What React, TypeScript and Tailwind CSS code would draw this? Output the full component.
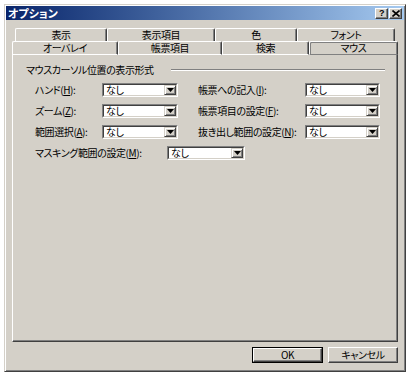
import React from "react";

function TitleBtn({ children }: { children: React.ReactNode }) {
  return (
    <div className="w-[13px] h-[11px] bg-[#d4d0c8] border border-t-white border-l-white border-r-[#404040] border-b-[#404040] shadow-[inset_-1px_-1px_0_#808080] flex items-center justify-center">
      {children}
    </div>
  );
}

function Combo({ w }: { w: string }) {
  return (
    <div className={`${w} h-[14px] border border-t-[#808080] border-l-[#808080] border-r-white border-b-white`}>
      <div className="h-full w-full border border-t-[#404040] border-l-[#404040] border-r-[#d4d0c8] border-b-[#d4d0c8] bg-white flex">
        <div className="flex-1 pl-[2px] flex items-center">なし</div>
        <div className="w-[12px] h-full bg-[#d4d0c8] border border-t-[#d4d0c8] border-l-[#d4d0c8] border-r-[#404040] border-b-[#404040] shadow-[inset_1px_1px_0_#fff,inset_-1px_-1px_0_#808080] flex items-center justify-center">
          <svg width="7" height="4" viewBox="0 0 7 4">
            <path d="M0 0h7L3.5 4z" fill="#000" />
          </svg>
        </div>
      </div>
    </div>
  );
}

function Label({ text, k, w }: { text: string; k: string; w: string }) {
  return (
    <div className={`${w} flex items-center`}>
      <span>
        {text}(<span className="underline">{k}</span>):
      </span>
    </div>
  );
}

const row1 = [
  { label: "表示", w: "w-[92px]" },
  { label: "表示項目", w: "w-[108px]" },
  { label: "色", w: "w-[82px]" },
  { label: "フォント", w: "w-[98px]" },
];
const row2 = [
  { label: "オーバレイ", w: "w-[106px]", sel: false },
  { label: "帳票項目", w: "w-[104px]", sel: false },
  { label: "検索", w: "w-[87px]", sel: false },
  { label: "マウス", w: "w-[89px]", sel: true },
];

export default function App() {
  return (
    <div className="w-[415px] h-[378px] bg-white pt-[4px] pl-[4px] font-['Noto_Sans_CJK_JP',sans-serif] [font-feature-settings:'palt'] text-[10px] tracking-[-0.4px] text-black leading-none">
      <div className="w-[402px] h-[368px] bg-[#d4d0c8] border border-t-[#d4d0c8] border-l-[#d4d0c8] border-r-[#404040] border-b-[#404040] shadow-[inset_1px_1px_0_#fff,inset_-1px_-1px_0_#808080] p-px flex flex-col">
        {/* title bar */}
        <div className="h-[14px] flex items-center justify-between pl-[2px] pr-[2px] bg-gradient-to-r from-[#0a246a] to-[#a6caf0]">
          <span className="text-white font-bold text-[11px] tracking-normal">オプション</span>
          <div className="flex gap-[1px]">
            <TitleBtn>
              <span className="font-bold text-[9px] font-['Liberation_Sans',sans-serif]">?</span>
            </TitleBtn>
            <TitleBtn>
              <svg width="8" height="7" viewBox="0 0 8 7">
                <path d="M0.5 0.5L7.5 6.5M7.5 0.5L0.5 6.5" stroke="#000" strokeWidth="1.6" />
              </svg>
            </TitleBtn>
          </div>
        </div>

        {/* tabs + panel */}
        <div className="mt-[8px] mx-[6px] flex flex-col">
          <div className="flex h-[13px] ml-[3px]">
            {row1.map((t) => (
              <div
                key={t.label}
                className={`${t.w} h-full border-t border-l border-r border-t-white border-l-white border-r-[#404040] rounded-t-[2px] shadow-[inset_-1px_0_0_#808080] flex items-center justify-center`}
              >
                {t.label}
              </div>
            ))}
          </div>
          <div className="flex h-[14px]">
            {row2.map((t) =>
              t.sel ? (
                <div
                  key={t.label}
                  className={`${t.w} h-full border border-t-white border-l-white border-r-[#404040] border-b-[#808080] rounded-t-[2px] shadow-[inset_-1px_0_0_#808080,inset_1px_1px_0_#808080] flex items-center justify-center`}
                >
                  {t.label}
                </div>
              ) : (
                <div
                  key={t.label}
                  className={`${t.w} h-full border-t border-l border-r border-b border-t-white border-l-white border-r-[#404040] border-b-white rounded-t-[2px] shadow-[inset_-1px_0_0_#808080] flex items-center justify-center`}
                >
                  {t.label}
                </div>
              )
            )}
          </div>
          <div className="h-[287px] border-l border-r border-b border-l-white border-r-[#404040] border-b-[#404040] shadow-[inset_-1px_-1px_0_#808080] pl-[13px] pr-[12px] pt-[8px] flex flex-col">
            <div className="h-[14px] flex items-center">
              <div className="w-[145px]">マウスカーソル位置の表示形式</div>
              <div className="flex-1 h-[2px] border-t border-t-[#808080] border-b border-b-white" />
            </div>
            <div className="mt-[2px] pl-[9px] flex flex-col">
              <div className="h-[21px] flex items-center">
                <Label text="ハンド" k="H" w="w-[67px]" />
                <Combo w="w-[76px]" />
                <div className="w-[20px]" />
                <Label text="帳票への記入" k="I" w="w-[107px]" />
                <Combo w="w-[75px]" />
              </div>
              <div className="h-[21px] flex items-center">
                <Label text="ズーム" k="Z" w="w-[67px]" />
                <Combo w="w-[76px]" />
                <div className="w-[20px]" />
                <Label text="帳票項目の設定" k="F" w="w-[107px]" />
                <Combo w="w-[75px]" />
              </div>
              <div className="h-[21px] flex items-center">
                <Label text="範囲選択" k="A" w="w-[67px]" />
                <Combo w="w-[76px]" />
                <div className="w-[20px]" />
                <Label text="抜き出し範囲の設定" k="N" w="w-[107px]" />
                <Combo w="w-[75px]" />
              </div>
              <div className="h-[21px] flex items-center">
                <Label text="マスキング範囲の設定" k="M" w="w-[132px]" />
                <Combo w="w-[78px]" />
              </div>
            </div>
          </div>
        </div>

        {/* buttons */}
        <div className="mt-[5px] mx-[6px] flex justify-end gap-[5px]">
          <div className="w-[71px] h-[16px] border border-black">
            <div className="w-full h-full border border-t-white border-l-white border-r-[#404040] border-b-[#404040] shadow-[inset_-1px_-1px_0_#808080] flex items-center justify-center">
              OK
            </div>
          </div>
          <div className="w-[70px] h-[16px] border border-t-white border-l-white border-r-[#404040] border-b-[#404040] shadow-[inset_-1px_-1px_0_#808080] flex items-center justify-center">
            キャンセル
          </div>
        </div>
      </div>
    </div>
  );
}
